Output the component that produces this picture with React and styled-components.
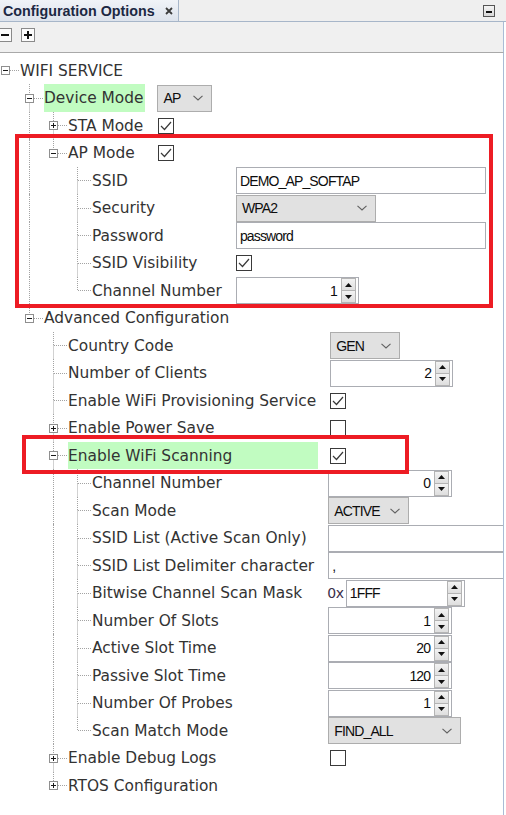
import React from 'react';
import styled, { createGlobalStyle } from 'styled-components';

const LABEL_FONT = `"DejaVu Sans", Verdana, sans-serif`;
const VALUE_FONT = `"Liberation Sans", Arial, sans-serif`;

const GlobalStyle = createGlobalStyle`
  html, body { margin: 0; padding: 0; background: #ffffff; }
  body { font-family: ${LABEL_FONT}; }
  * { box-sizing: border-box; }
`;

const Window = styled.div`
  width: 506px;
  height: 815px;
  display: flex;
  flex-direction: column;
  overflow: hidden;
  background: #ffffff;
`;

const TitleBar = styled.div`
  height: 22px;
  display: flex;
  align-items: stretch;
  background: #efefef;
  border-bottom: 1px solid #a7b6c9;
  flex-shrink: 0;
`;

const Tab = styled.div`
  width: 179px;
  display: flex;
  align-items: center;
  gap: 10px;
  padding-left: 3px;
  background: linear-gradient(#f0f3f8, #dde3ec);
  border-right: 1px solid #a7b6c9;
  font: bold 14.3px ${VALUE_FONT};
  color: #1c2843;
  white-space: nowrap;
`;

const MinButton = styled.div`
  margin-left: auto;
  margin-right: 11px;
  align-self: center;
  width: 12px;
  height: 12px;
  display: flex;
`;

const Toolbar = styled.div`
  height: 31px;
  width: 504px;
  flex-shrink: 0;
  display: flex;
  align-items: flex-start;
  gap: 9px;
  padding-top: 6px;
  background: #f0f0f0;
  border-bottom: 1px solid #a9a9a9;
  border-right: 1px solid #a9bcd6;
`;

const ToolButton = styled.div`
  width: 14px;
  height: 14px;
  display: flex;
  margin-left: ${p => (p.$first ? '-2px' : '0')};
`;

const Content = styled.div`
  position: relative;
  flex: 1;
  width: 504px;
  padding-top: 4px;
  background: #ffffff;
  border-right: 1px solid #a9bcd6;
  overflow: hidden;
`;

const Group = styled.div`
  display: grid;
  grid-template-columns: max-content 1fr;
  column-gap: 12px;
  grid-column: ${p => (p.$nested ? '1 / -1' : 'auto')};
`;

const LabelCell = styled.div`
  display: flex;
  align-items: stretch;
  height: ${p => p.$h}px;
  grid-column: ${p => (p.$span ? '1 / -1' : 'auto')};
`;

const Guide = styled.div`
  flex-shrink: 0;
  width: 19px;
  margin-left: 5px;
  border-left: 1px dotted ${p => (p.$line ? '#a3a3a3' : 'transparent')};
`;

const ConnectorSvg = styled.svg`
  flex-shrink: 0;
  display: block;
`;

const LabelText = styled.span`
  flex: 1;
  padding-right: 2px;
  font: 15.4px ${LABEL_FONT};
  color: #333333;
  white-space: nowrap;
  display: flex;
  align-items: center;
  background: ${p => (p.$hl ? '#c1fcc1' : 'transparent')};
`;

const ValueCell = styled.div`
  display: flex;
  align-items: center;
  height: ${p => p.$h}px;
  min-width: 0;
  white-space: nowrap;
`;

const controlText = `
  font: 14px ${VALUE_FONT};
  letter-spacing: -0.85px;
  color: #0d0d0d;
`;

const Select = styled.div`
  ${controlText}
  flex-shrink: 0;
  width: ${p => p.$w}px;
  height: 27px;
  display: flex;
  align-items: center;
  justify-content: space-between;
  padding: 0 8px 0 5px;
  background: #e1e1e1;
  border: 1px solid #adadad;
`;

const TextBox = styled.div`
  ${controlText}
  flex-shrink: 0;
  width: ${p => p.$w}px;
  height: 27px;
  display: flex;
  align-items: center;
  padding: 0 3px;
  background: #ffffff;
  border: 1px solid #abadb3;
`;

const Spinner = styled.div`
  ${controlText}
  flex-shrink: 0;
  width: ${p => p.$w}px;
  height: 27px;
  display: flex;
  align-items: center;
  padding-right: 2px;
  background: #ffffff;
  border: 1px solid #abadb3;
`;

const SpinValue = styled.span`
  flex: 1;
  text-align: ${p => (p.$left ? 'left' : 'right')};
  padding: ${p => (p.$left ? '0 0 0 3px' : '0 4px 0 0')};
`;

const SpinButtons = styled.div`
  width: 15px;
  height: 25px;
  display: flex;
  flex-direction: column;
`;

const SpinButton = styled.div`
  flex: 1;
  display: flex;
  align-items: center;
  justify-content: center;
  background: linear-gradient(#f3f3f3, #dedede);
  border: 1px solid #b4b4b4;
  margin-top: ${p => (p.$down ? '-1px' : '0')};
`;

const HexWrap = styled.div`
  display: flex;
  align-items: center;
  gap: 2px;
  margin-left: -1px;
`;

const HexPrefix = styled.span`
  font: 14px ${LABEL_FONT};
  letter-spacing: -0.3px;
  color: #3b2f4a;
`;

const CheckBox = styled.div`
  width: 16px;
  height: 16px;
  flex-shrink: 0;
  background: #ffffff;
  border: 1px solid #3a3a3a;
  display: flex;
  margin-left: ${p => (p.$offset ? '1px' : '0')};
`;

const RedBox = styled.div`
  position: absolute;
  left: ${p => p.$x}px;
  top: ${p => p.$y}px;
  width: ${p => p.$w}px;
  height: ${p => p.$h}px;
  border: 4px solid #ed1c24;
  pointer-events: none;
`;

/* ---------- icons ---------- */

const CloseIcon = () => (
  <svg width="8" height="8" viewBox="0 0 8 8">
    <path d="M1 1 L7 7 M7 1 L1 7" stroke="#3c3c3c" strokeWidth="1.8" />
  </svg>
);

const MinimizeIcon = () => (
  <svg width="12" height="12" viewBox="0 0 12 12">
    <defs>
      <linearGradient id="mg" x1="0" y1="0" x2="0" y2="1">
        <stop offset="0" stopColor="#f6f6f6" />
        <stop offset="1" stopColor="#d6d6d6" />
      </linearGradient>
    </defs>
    <rect x="0.5" y="0.5" width="11" height="11" fill="url(#mg)" stroke="#555" />
    <rect x="3" y="6" width="6" height="2" fill="#111" />
  </svg>
);

const ToolIcon = ({ plus }) => (
  <svg width="14" height="14" viewBox="0 0 14 14">
    <rect x="0.5" y="0.5" width="13" height="13" fill="#fbfbfb" stroke="#8a8a8a" />
    <rect x="3" y="6" width="8" height="2" fill="#111" />
    {plus && <rect x="6" y="3" width="2" height="8" fill="#111" />}
  </svg>
);

const Chevron = () => (
  <svg width="10" height="6" viewBox="0 0 10 6">
    <polyline points="0.5,0.8 5,5 9.5,0.8" fill="none" stroke="#616161" strokeWidth="1.1" />
  </svg>
);

const Triangle = ({ down }) => (
  <svg width="7" height="4" viewBox="0 0 7 4">
    <polygon points={down ? '0,0 7,0 3.5,4' : '3.5,0 7,4 0,4'} fill="#111" />
  </svg>
);

const CheckMark = () => (
  <svg width="14" height="14" viewBox="0 0 14 14">
    <polyline points="2,7 5.5,10.5 12,3" fill="none" stroke="#3a3a3a" strokeWidth="1.2" />
  </svg>
);

const Connector = ({ h, root, last, expander }) => {
  const cy = Math.floor(h / 2) + 0.5;
  return (
    <ConnectorSvg width="20" height={h} viewBox={`0 0 20 ${h}`}>
      <g stroke="#a3a3a3" strokeWidth="1" strokeDasharray="1 1" fill="none">
        {!root && <line x1="5.5" y1="0" x2="5.5" y2={cy} />}
        {!root && !last && <line x1="5.5" y1={cy} x2="5.5" y2={h} />}
        <line x1={expander ? 10 : 6} y1={cy} x2="20" y2={cy} />
      </g>
      {expander && (
        <g>
          <rect x="1.5" y={cy - 4} width="8" height="8" fill="#ffffff" stroke="#8f8f8f" />
          <line x1="3" y1={cy} x2="8" y2={cy} stroke="#1a1a1a" />
          {expander === 'plus' && <line x1="5.5" y1={cy - 2.5} x2="5.5" y2={cy + 2.5} stroke="#1a1a1a" />}
        </g>
      )}
    </ConnectorSvg>
  );
};

/* ---------- data ---------- */

const tree = [
  {
    label: 'WIFI SERVICE',
    expanded: true,
    children: [
      {
        label: 'Device Mode',
        highlight: true,
        value: { type: 'select', text: 'AP', w: 55 },
        expanded: true,
        children: [
          { label: 'STA Mode', collapsed: true, value: { type: 'check', checked: true, offset: true } },
          {
            label: 'AP Mode',
            expanded: true,
            value: { type: 'check', checked: true, offset: true },
            children: [
              { label: 'SSID', value: { type: 'text', text: 'DEMO_AP_SOFTAP', w: 250 } },
              { label: 'Security', value: { type: 'select', text: 'WPA2', w: 140 } },
              { label: 'Password', value: { type: 'text', text: 'password', w: 250 } },
              { label: 'SSID Visibility', value: { type: 'check', checked: true } },
              { label: 'Channel Number', value: { type: 'spin', text: '1', w: 123 } },
            ],
          },
        ],
      },
      {
        label: 'Advanced Configuration',
        expanded: true,
        children: [
          { label: 'Country Code', value: { type: 'select', text: 'GEN', w: 70 } },
          { label: 'Number of Clients', value: { type: 'spin', text: '2', w: 123 } },
          { label: 'Enable WiFi Provisioning Service', value: { type: 'check', checked: true } },
          { label: 'Enable Power Save', collapsed: true, value: { type: 'check', checked: false } },
          {
            label: 'Enable WiFi Scanning',
            highlight: true,
            expanded: true,
            value: { type: 'check', checked: true },
            children: [
              { label: 'Channel Number', value: { type: 'spin', text: '0', w: 124 } },
              { label: 'Scan Mode', value: { type: 'select', text: 'ACTIVE', w: 81 } },
              { label: 'SSID List (Active Scan Only)', value: { type: 'text', text: '', w: 250 } },
              { label: 'SSID List Delimiter character', value: { type: 'text', text: ',', w: 250 } },
              { label: 'Bitwise Channel Scan Mask', value: { type: 'hex', text: '1FFF', w: 119 } },
              { label: 'Number Of Slots', value: { type: 'spin', text: '1', w: 124 } },
              { label: 'Active Slot Time', value: { type: 'spin', text: '20', w: 124 } },
              { label: 'Passive Slot Time', value: { type: 'spin', text: '120', w: 124 } },
              { label: 'Number Of Probes', value: { type: 'spin', text: '1', w: 124 } },
              { label: 'Scan Match Mode', value: { type: 'select', text: 'FIND_ALL', w: 133 } },
            ],
          },
          { label: 'Enable Debug Logs', collapsed: true, value: { type: 'check', checked: false } },
          { label: 'RTOS Configuration', collapsed: true },
        ],
      },
    ],
  },
];

// assign visible row indexes (alternating 27 / 28 px rows)
let counter = 0;
const indexRows = nodes =>
  nodes.forEach(n => {
    n.row = counter++;
    if (n.expanded && n.children) indexRows(n.children);
  });
indexRows(tree);

const SpinBox = ({ w, text, left }) => (
  <Spinner $w={w}>
    <SpinValue $left={left}>{text}</SpinValue>
    <SpinButtons>
      <SpinButton><Triangle /></SpinButton>
      <SpinButton $down><Triangle down /></SpinButton>
    </SpinButtons>
  </Spinner>
);

const Value = ({ v }) => {
  switch (v.type) {
    case 'select':
      return (
        <Select $w={v.w}>
          <span>{v.text}</span>
          <Chevron />
        </Select>
      );
    case 'text':
      return <TextBox $w={v.w}>{v.text}</TextBox>;
    case 'spin':
      return <SpinBox w={v.w} text={v.text} />;
    case 'hex':
      return (
        <HexWrap>
          <HexPrefix>0x</HexPrefix>
          <SpinBox w={v.w} text={v.text} left />
        </HexWrap>
      );
    case 'check':
      return <CheckBox $offset={v.offset}>{v.checked && <CheckMark />}</CheckBox>;
    default:
      return null;
  }
};

const TreeGroup = ({ nodes, level, lines, nested }) => (
  <Group $nested={nested}>
    {nodes.map((node, i) => {
      const last = i === nodes.length - 1;
      const h = node.row % 2 === 0 ? 27 : 28;
      const expander = node.expanded ? 'minus' : node.collapsed ? 'plus' : null;
      return (
        <React.Fragment key={node.label + node.row}>
          <LabelCell $h={h} $span={!node.value}>
            {lines.map((ln, k) => (
              <Guide key={k} $line={ln} />
            ))}
            <Connector h={h} root={level === 0} last={last} expander={expander} />
            <LabelText $hl={node.highlight}>{node.label}</LabelText>
          </LabelCell>
          {node.value && (
            <ValueCell $h={h}>
              <Value v={node.value} />
            </ValueCell>
          )}
          {node.expanded && node.children && (
            <TreeGroup nodes={node.children} level={level + 1} lines={[...lines, !last && level > 0]} nested />
          )}
        </React.Fragment>
      );
    })}
  </Group>
);

export default function App() {
  return (
    <>
      <GlobalStyle />
      <Window>
        <TitleBar>
          <Tab>
            Configuration Options
            <CloseIcon />
          </Tab>
          <MinButton>
            <MinimizeIcon />
          </MinButton>
        </TitleBar>
        <Toolbar>
          <ToolButton $first>
            <ToolIcon />
          </ToolButton>
          <ToolButton>
            <ToolIcon plus />
          </ToolButton>
        </Toolbar>
        <Content>
          <TreeGroup nodes={tree} level={0} lines={[]} />
          <RedBox $x={15} $y={81} $w={478} $h={174} />
          <RedBox $x={22} $y={382} $w={387} $h={39} />
        </Content>
      </Window>
    </>
  );
}
